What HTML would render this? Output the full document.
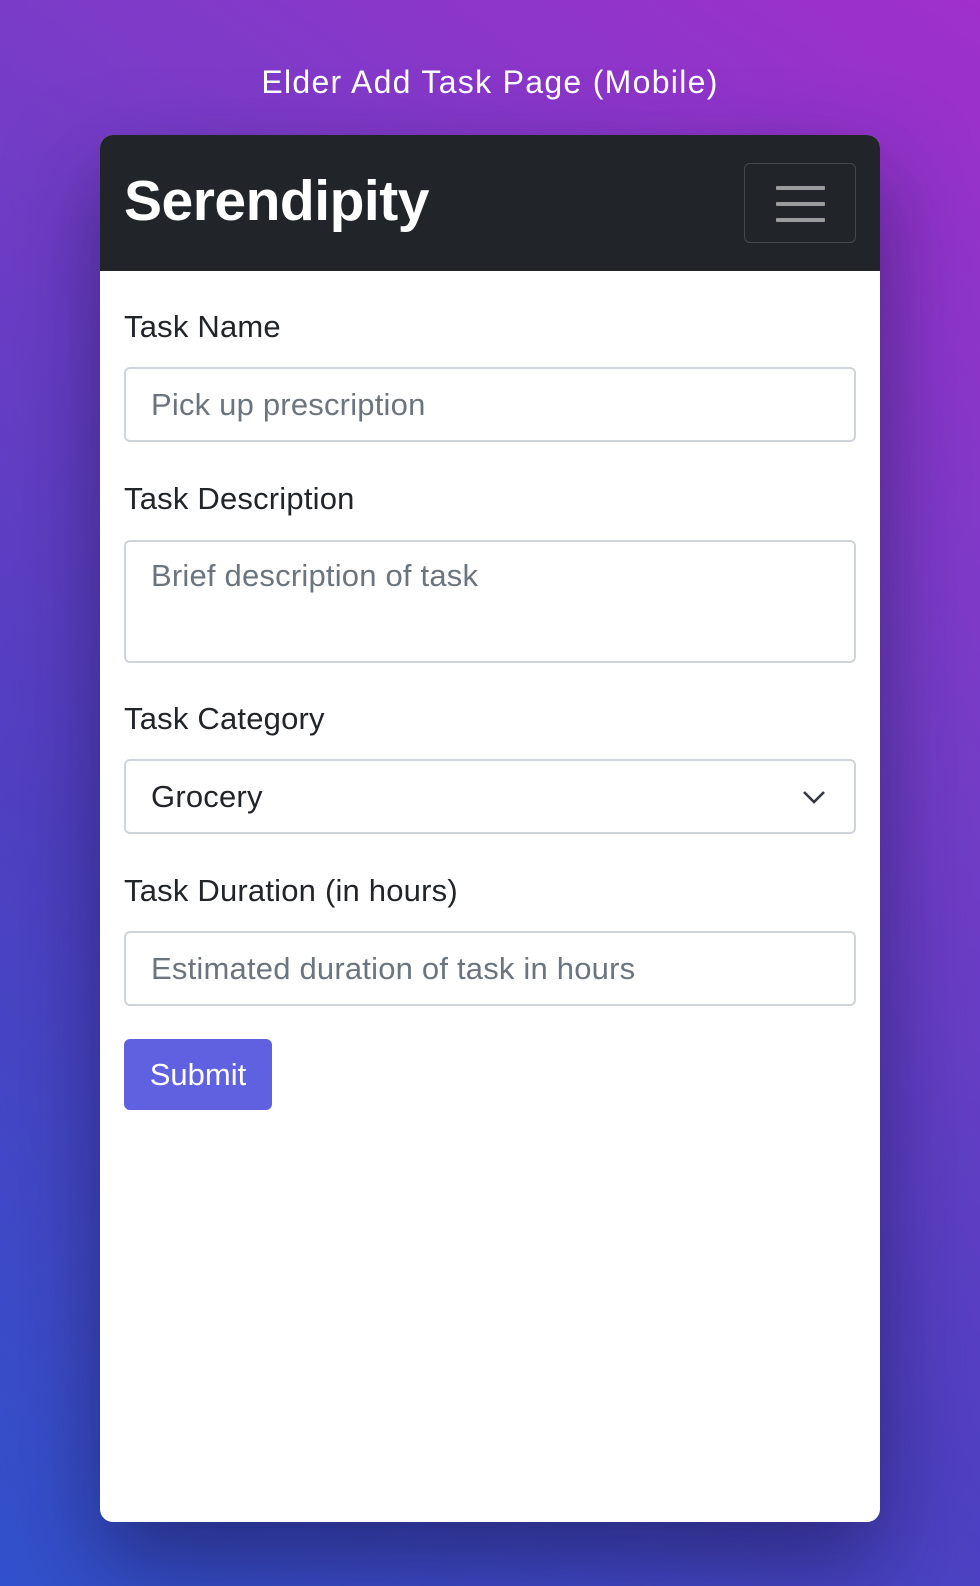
<!DOCTYPE html>
<html><head><meta charset="utf-8"><style>
*{box-sizing:border-box;margin:0;padding:0}
html,body{width:980px;height:1586px;overflow:hidden}
body{position:relative;font-family:"Liberation Sans",sans-serif;
background:linear-gradient(35deg,#3152cc 0%,#5040c2 35%,#7a3cc8 70%,#a02fcb 100%);}
.title{position:absolute;top:64px;left:0;width:980px;text-align:center;color:#fff;font-size:32px;font-weight:300;letter-spacing:1.3px}
.card{position:absolute;left:100px;top:135px;width:780px;height:1387px;background:#fff;border-radius:13px;overflow:hidden;box-shadow:0 40px 90px rgba(20,20,70,.55)}
.nav{height:136px;background:#212529;position:relative}
.brand{position:absolute;left:24px;top:33px;color:#fff;font-weight:bold;font-size:57px;letter-spacing:-0.5px}
.tog{position:absolute;left:644px;top:28px;width:112px;height:80px;border:1px solid #44484d;border-radius:6px}
.tog i{position:absolute;left:31px;width:49px;height:4px;background:#9a9c9e;border-radius:1px}
.lbl{position:absolute;left:24px;color:#212529;font-size:31px;letter-spacing:0.2px}
.inp{position:absolute;left:24px;width:732px;border:2px solid #ced4da;border-radius:6px;color:#6c757d;font-size:31px;letter-spacing:0.2px;padding-left:25px}
.btn{position:absolute;left:24px;top:904px;width:148px;height:71px;background:#6061e0;color:#fff;border-radius:6px;font-size:31px;text-align:center;line-height:71px}
</style></head><body>
<div class="title">Elder Add Task Page (Mobile)</div>
<div class="card">
<div class="nav"><div class="brand">Serendipity</div>
<div class="tog"><i style="top:22px"></i><i style="top:38px"></i><i style="top:54px"></i></div></div>
<div class="lbl" style="top:174px">Task Name</div>
<div class="inp" style="top:232px;height:75px;line-height:71px">Pick up prescription</div>
<div class="lbl" style="top:346px">Task Description</div>
<div class="inp" style="top:405px;height:123px;padding-top:16px;line-height:36px">Brief description of task</div>
<div class="lbl" style="top:566px">Task Category</div>
<div class="inp" style="top:624px;height:75px;line-height:71px;color:#212529">Grocery
<svg style="position:absolute;right:28px;top:27px" width="24" height="18" viewBox="0 0 24 18"><path d="M2 4l10 10 10-10" fill="none" stroke="#343a40" stroke-width="2.6"/></svg></div>
<div class="lbl" style="top:738px">Task Duration (in hours)</div>
<div class="inp" style="top:796px;height:75px;line-height:71px">Estimated duration of task in hours</div>
<div class="btn">Submit</div>
</div>
</body></html>
